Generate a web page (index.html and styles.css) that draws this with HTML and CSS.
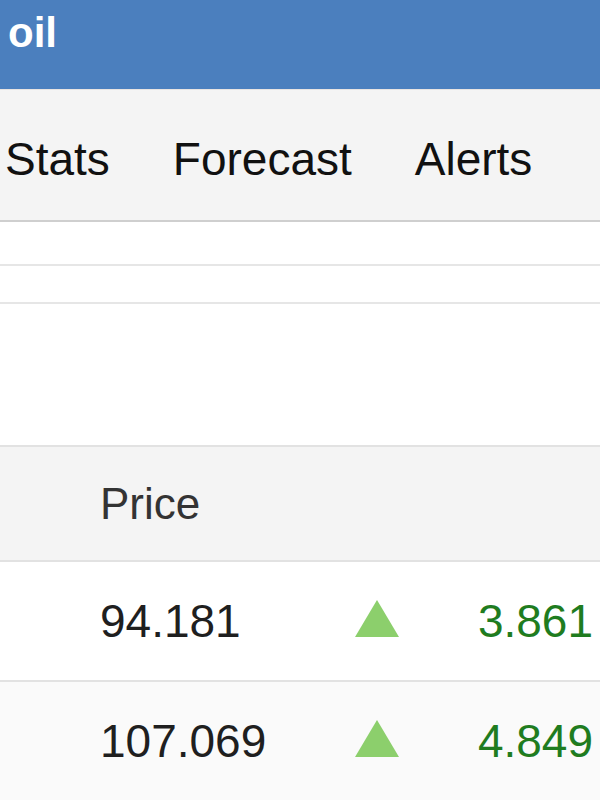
FILE: index.html
```html
<!DOCTYPE html>
<html>
<head>
    <title>oil</title>
    <link rel="stylesheet" href="styles.css">
</head>
<body>
    <div class="topbar">
        <span class="title">oil</span>
    </div>
    <div class="tabs">
        <a href="#">Stats</a>
        <a href="#">Forecast</a>
        <a href="#">Alerts</a>
    </div>
    <div class="blank-row first"></div>
    <div class="blank-row second"></div>
    <div class="spacer"></div>
    <div class="quotes">
        <div class="quote-row head">
            <span class="price">Price</span>
        </div>
        <div class="quote-row">
            <span class="price">94.181</span>
            <span class="arrow">
                <svg width="44" height="38" viewBox="0 0 44 38"><polygon points="22,0 44,37 0,37" fill="#8ccf6c"/></svg>
            </span>
            <span class="change up">3.861</span>
        </div>
        <div class="quote-row alt">
            <span class="price">107.069</span>
            <span class="arrow">
                <svg width="44" height="38" viewBox="0 0 44 38"><polygon points="22,0 44,37 0,37" fill="#8ccf6c"/></svg>
            </span>
            <span class="change up">4.849</span>
        </div>
    </div>
</body>
</html>
```

FILE: styles.css
```css
body {
    margin: 0;
    font-family: "Liberation Sans", Arial, sans-serif;
    color: #1f1f1f;
    background: #fff;
    overflow: hidden;
}

.topbar {
    background-color: #4b7fbe;
    height: 80px;
    padding: 9px 0 0 8px;
    border-bottom: 1px solid #e9e4e2;
}

.title {
    display: block;
    font-size: 42px;
    line-height: 48px;
    font-weight: bold;
    color: #fff;
}

.tabs {
    background-color: #f4f4f4;
    height: 130px;
    border-bottom: 2px solid #cfcfcf;
    display: flex;
    align-items: center;
    gap: 63px;
    padding-left: 5px;
}

.tabs a {
    font-size: 46px;
    color: #111;
    text-decoration: none;
    padding-top: 8px;
}

.blank-row {
    border-bottom: 2px solid #e6e6e6;
}

.blank-row.first {
    height: 42px;
}

.blank-row.second {
    height: 36px;
}

.spacer {
    height: 141px;
    border-bottom: 2px solid #e2e2e2;
}

.quote-row {
    display: grid;
    grid-template-columns: 100px 255px 44px 1fr;
    align-items: center;
    height: 118px;
    border-bottom: 2px solid #e2e2e2;
    font-size: 46px;
}

.quote-row.head {
    height: 113px;
    background-color: #f4f4f4;
    color: #333;
    font-size: 44px;
}

.quote-row.alt {
    background-color: #fafafa;
    border-bottom: none;
}

.price {
    grid-column: 2;
}

.arrow {
    grid-column: 3;
    display: flex;
    padding-bottom: 4px;
}

.change {
    grid-column: 4;
    text-align: right;
    padding-right: 7px;
}

.change.up {
    color: #1f7c1f;
}
```
